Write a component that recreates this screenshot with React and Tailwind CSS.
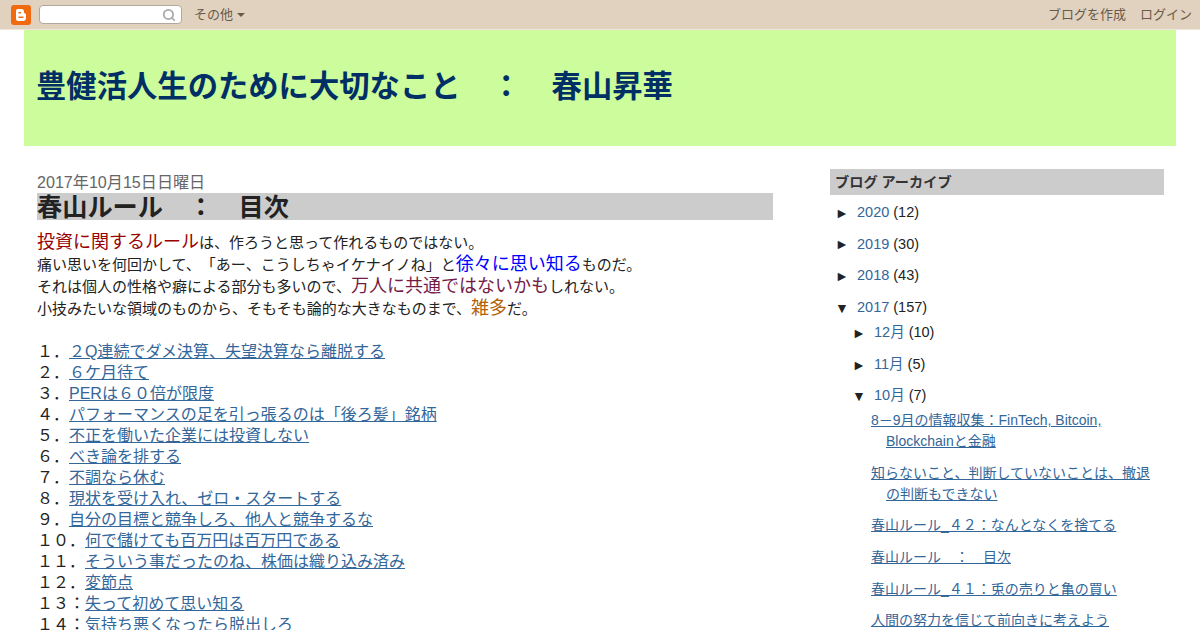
import React from "react";
import { Search } from "lucide-react";

const rules = [
  ["１．", "２Q連続でダメ決算、失望決算なら離脱する"],
  ["２．", "６ケ月待て"],
  ["３．", "PERは６０倍が限度"],
  ["４．", "パフォーマンスの足を引っ張るのは「後ろ髪」銘柄"],
  ["５．", "不正を働いた企業には投資しない"],
  ["６．", "べき論を排する"],
  ["７．", "不調なら休む"],
  ["８．", "現状を受け入れ、ゼロ・スタートする"],
  ["９．", "自分の目標と競争しろ、他人と競争するな"],
  ["１０．", "何で儲けても百万円は百万円である"],
  ["１１．", "そういう事だったのね、株価は織り込み済み"],
  ["１２．", "変節点"],
  ["１３：", "失って初めて思い知る"],
  ["１４：", "気持ち悪くなったら脱出しろ"],
];

const years = [
  ["2020", "(12)"],
  ["2019", "(30)"],
  ["2018", "(43)"],
];

const months = [
  ["12月", "(10)"],
  ["11月", "(5)"],
];

const posts = [
  "8－9月の情報収集：FinTech, Bitcoin, Blockchainと金融",
  "知らないこと、判断していないことは、撤退の判断もできない",
  "春山ルール_４２：なんとなくを捨てる",
  "春山ルール　：　目次",
  "春山ルール_４１：兎の売りと亀の買い",
  "人間の努力を信じて前向きに考えよう",
];

const font = "font-['Liberation_Sans','Noto_Sans_CJK_JP',sans-serif]";

function Navbar() {
  return (
    <div className="flex h-[30px] items-center justify-between border-b border-[#ede5da] bg-[#e0d2bf] pl-[11px] pr-2 text-[13px] text-[#6b5a4a]">
      <div className="flex items-center">
        <div className="flex h-5 w-5 items-center justify-center rounded-[3px] bg-[#f06a0f]">
          <svg width="12" height="14" viewBox="0 0 12 14">
            <path
              fillRule="evenodd"
              fill="#fff"
              d="M3 1h3.5C8 1 9 2 9 3.5V5c1.2 0 2 .8 2 2v3c0 1.8-1.2 3-3 3H3c-1.4 0-2-1-2-2.500V3c0-1.200.8-2 2-2zM3.500 4v1.500h2.500V4zM3.500 8.500V10h5V8.500z"
            />
          </svg>
        </div>
        <div className="ml-2 flex h-[19px] w-[143px] items-center justify-end rounded-sm border border-[#b0a89c] bg-white pr-[5px]">
          <Search size={14} strokeWidth={3} className="text-[#a8a8a8]" />
        </div>
        <span className="ml-3">その他</span>
        <span className="ml-1 h-0 w-0 border-x-4 border-t-4 border-x-transparent border-t-[#6b5a4a]"></span>
      </div>
      <div className="flex gap-[14px]">
        <span>ブログを作成</span>
        <span>ログイン</span>
      </div>
    </div>
  );
}

function Post() {
  return (
    <div className="w-[736px]">
      <div className="h-6 pt-px text-[16.1px] leading-6 text-[#666666]">2017年10月15日日曜日</div>
      <h3 className="h-[27px] overflow-hidden bg-[#cccccc] pt-px text-[25.2px] font-bold leading-[27px] text-[#222222]">春山ルール　：　目次</h3>
      <div className="mt-3 text-[15px] text-[#222222]">
        <div className="h-[22px] leading-[22px]">
          <span className="text-lg leading-none text-[#990000]">投資に関するルール</span>は、作ろうと思って作れるものではない。
        </div>
        <div className="h-[22px] leading-[22px]">
          痛い思いを何回かして、「あー、こうしちゃイケナイノね」と<span className="text-lg leading-none text-[#0000ff]">徐々に思い知る</span>ものだ。
        </div>
        <div className="h-[22px] leading-[22px]">
          それは個人の性格や癖による部分も多いので、<span className="text-lg leading-none text-[#741b47]">万人に共通ではないかも</span>しれない。
        </div>
        <div className="h-[22px] leading-[22px]">
          小技みたいな領域のものから、そもそも論的な大きなものまで、<span className="text-lg leading-none text-[#b45f06]">雑多</span>だ。
        </div>
      </div>
      <ul className="mt-[21px] text-base leading-[21px] text-[#222222]">
        {rules.map(([no, title]) => (
          <li key={no} className="h-[21px]">
            {no}
            <a className="text-[#336699] underline">{title}</a>
          </li>
        ))}
      </ul>
    </div>
  );
}

function Archive() {
  return (
    <div className="w-[334px] text-[14.5px] text-[#222222]">
      <h2 className="h-[26px] bg-[#cccccc] pl-[5px] text-[14.2px] font-bold leading-[26px] text-[#333333]">ブログ アーカイブ</h2>
      <div className="mt-[2px] pl-[5px]">
        {years.map(([year, count]) => (
          <div key={year} className="flex h-[31.6px] items-center">
            <span className="w-[22px] text-sm">►</span>
            <a className="mr-1 text-[#336699]">{year}</a>
            {count}
          </div>
        ))}
        <div className="flex h-[31.6px] items-center">
          <span className="w-[22px] text-sm">▼</span>
          <a className="mr-1 text-[#336699]">2017</a>
          (157)
        </div>
        <div className="-mt-[6px] pl-[17px]">
          {months.map(([month, count]) => (
            <div key={month} className="flex h-[31.6px] items-center">
              <span className="w-[22px] text-sm">►</span>
              <a className="mr-1 text-[#336699]">{month}</a>
              {count}
            </div>
          ))}
          <div className="flex h-[31.6px] items-center">
            <span className="w-[22px] text-sm">▼</span>
            <a className="mr-1 text-[#336699]">10月</a>
            (7)
          </div>
          <ul className="-mt-[2px] pl-[19px] text-sm">
            {posts.map((title) => (
              <li key={title} className="mb-[10.6px] pl-[15px] -indent-[15px] leading-[21px]">
                <a className="text-[#336699] underline">{title}</a>
              </li>
            ))}
          </ul>
        </div>
      </div>
    </div>
  );
}

export default function App() {
  return (
    <div className={`h-[630px] overflow-hidden bg-white [text-spacing-trim:space-all] ${font}`}>
      <Navbar />
      <div className="mx-6 flex h-[116px] items-center bg-[#ccfc9c] pb-[3px] pl-3">
        <h1 className="text-[30.33px] font-bold text-[#002f66]">豊健活人生のために大切なこと　：　春山昇華</h1>
      </div>
      <div className="flex justify-between pl-[37px] pr-9 pt-[23px]">
        <Post />
        <Archive />
      </div>
    </div>
  );
}
